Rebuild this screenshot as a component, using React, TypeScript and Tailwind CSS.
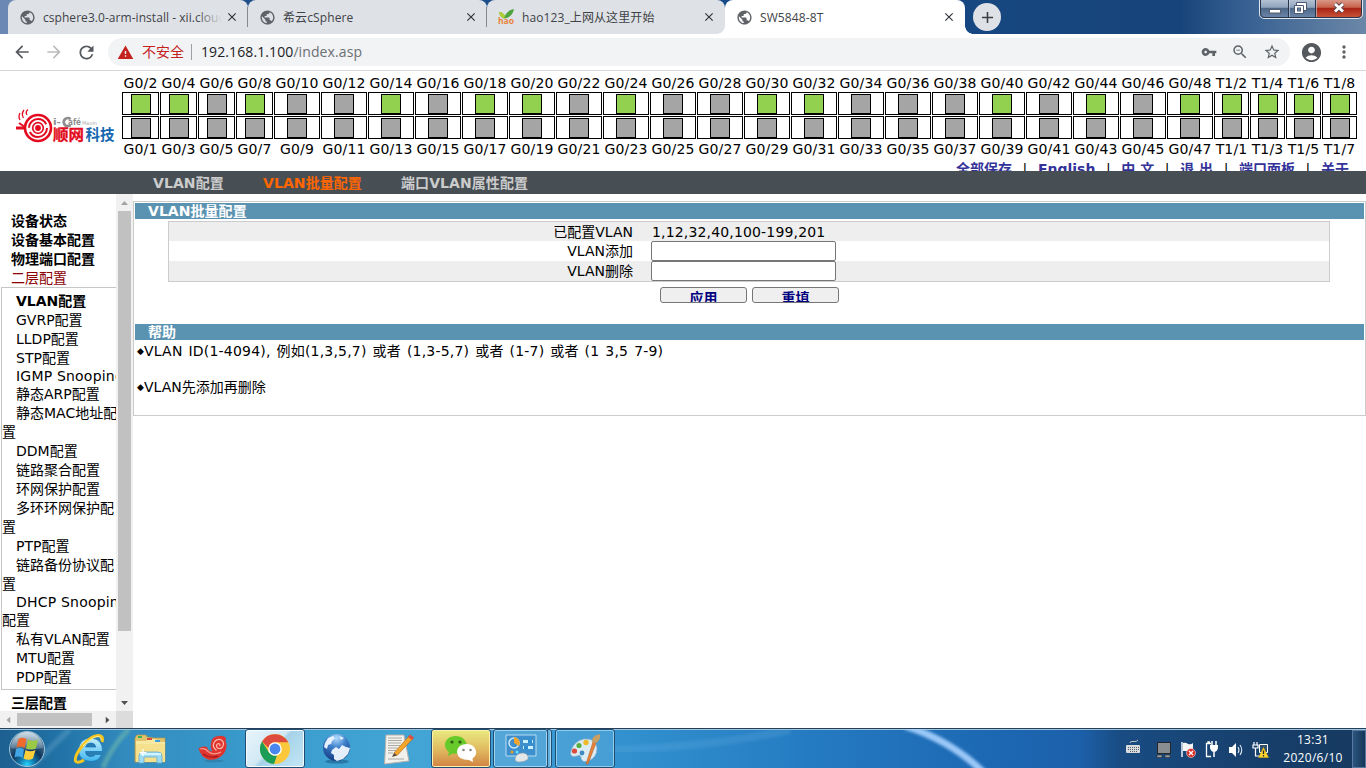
import type { ReactNode } from 'react';
import {
  MdArrowBack, MdArrowForward, MdRefresh, MdWarning, MdVpnKey, MdZoomOut,
  MdStarBorder, MdAccountCircle, MdMoreVert, MdPublic, MdClose, MdAdd,
} from 'react-icons/md';

const UI = "font-['Open_Sans','Noto_Sans_CJK_SC',sans-serif]";
const PAGE = "font-['DejaVu_Sans','Noto_Sans_CJK_SC',sans-serif]";

/* ---------- browser frame ---------- */

function HaoIcon() {
  return (
    <svg width="18" height="18" viewBox="0 0 18 18" className="-ml-px shrink-0 overflow-visible">
      <path d="M2 4 C5 4 7 6 8 8 C9 5 12 2 17 1 C16 6 13 10 7 10.500 C4 9.500 2.500 7 2 4Z" fill="#4fa33c" />
      <path d="M2 4 C5 4 7 6 8 8 L7 10.500 C4 9.500 2.500 7 2 4Z" fill="#b4d034" />
      <text x="1" y="15.500" fontSize="8.500" fontWeight="bold" fontFamily="Open Sans, sans-serif" fill="#e8813a" textLength="16" lengthAdjust="spacingAndGlyphs">hao</text>
    </svg>
  );
}

function Tab({ title, icon, active, separator, fade, width }: { title: string; icon?: ReactNode; active?: boolean; separator?: boolean; fade?: boolean; width: string }) {
  return (
    <div className={`relative flex h-[34px] items-center rounded-t-[8px] pl-[11px] pr-[9px] ${width} ${active ? 'bg-white' : 'bg-[#dee1e6]'}`}>
      {icon ?? <MdPublic className="size-[17px] shrink-0 text-[#5f6368]" />}
      <div className={`relative ml-[7px] mt-[2px] h-[22px] flex-1 overflow-hidden whitespace-nowrap text-[12px] leading-[21px] text-[#3f4347] ${fade ? 'tracking-[0.05px]' : 'tracking-[0.1px]'}`}>
        {title}
        {fade && <span className="absolute right-0 top-0 h-full w-[26px] bg-gradient-to-r from-transparent to-[#dee1e6]" />}
      </div>
      <MdClose className="ml-[3px] size-[14px] shrink-0 text-[#303438]" />
      {separator && <span className="absolute right-0 top-[7px] h-[20px] w-px bg-[#85898e]" />}
      {active && (
        <>
          <span className="absolute bottom-0 left-[-8px] size-[8px] bg-[radial-gradient(circle_at_0_0,transparent_7.500px,white_8px)]" />
          <span className="absolute bottom-0 right-[-8px] size-[8px] bg-[radial-gradient(circle_at_100%_0,transparent_7.500px,white_8px)]" />
        </>
      )}
    </div>
  );
}

function WindowButtons() {
  return (
    <svg width="106" height="20" viewBox="0 0 106 20">
      <defs>
        <linearGradient id="wb" x1="0" y1="0" x2="0" y2="1">
          <stop offset="0" stopColor="#b9c6d6" /><stop offset="0.45" stopColor="#8fa3bc" /><stop offset="0.5" stopColor="#4d6789" /><stop offset="1" stopColor="#6b86a8" />
        </linearGradient>
        <linearGradient id="wr" x1="0" y1="0" x2="0" y2="1">
          <stop offset="0" stopColor="#dba08f" /><stop offset="0.45" stopColor="#c8614b" /><stop offset="0.5" stopColor="#a92413" /><stop offset="1" stopColor="#c9543a" />
        </linearGradient>
      </defs>
      <path d="M1 -1H104V13Q104 17.500 99 17.500H6Q1 17.500 1 13Z" fill="url(#wb)" />
      <path d="M57 -1H104V13Q104 17.500 99 17.500H57Z" fill="url(#wr)" />
      <path d="M0.500 -1V14Q0.500 18.500 6 18.500H98Q103.500 18.500 103.500 14V-1" fill="none" stroke="#dfe6ee" />
      <path d="M1.500 -1V13Q1.500 17.500 6 17.500H98Q102.500 17.500 102.500 13V-1M29.500 0V17M56.500 0V17" fill="none" stroke="#26364c" />
      <path d="M30.500 0V17M57.500 0V17" stroke="#c9d3df" strokeOpacity="0.6" />
      <rect x="10.500" y="9.500" width="11" height="3.500" fill="#fff" stroke="#56606e" />
      <path d="M37.500 2.500H47.500V10.500H37.500Z" fill="#fff" stroke="#4a5a74" />
      <path d="M35.500 5.500H44.500V13.500H35.500Z" fill="#fff" stroke="#4a5a74" />
      <rect x="38.500" y="8" width="3" height="3" fill="#6f86a8" stroke="#4a5a74" />
      <path d="M76 4L84 11.500M84 4L76 11.500" stroke="#58434c" strokeWidth="4.600" />
      <path d="M76 4L84 11.500M84 4L76 11.500" stroke="#fff" strokeWidth="2.800" />
    </svg>
  );
}

function BrowserFrame() {
  return (
    <div className={`shrink-0 ${UI}`}>
      <div className="flex h-[34px] items-start bg-[linear-gradient(90deg,#6b88b4_0px,#6b88b4_10px,#205089_200px,#174b88_700px,#17447a_1180px,#355f91_1240px,#6b87a7_1366px)] pl-[8px]">
        <Tab title="csphere3.0-arm-install - xii.cloud" fade separator width="w-[240px]" />
        <Tab title="希云cSphere" separator width="w-[239px]" />
        <Tab title="hao123_上网从这里开始" icon={<HaoIcon />} width="w-[238px]" />
        <Tab title="SW5848-8T" active width="w-[240px]" />
        <div className="ml-[8px] mt-[3px] flex size-[28px] items-center justify-center rounded-full bg-[#dee1e6]">
          <MdAdd className="size-[19px] text-[#3c4043]" />
        </div>
        <div className="ml-auto mr-[1px]"><WindowButtons /></div>
      </div>
      <div className="flex h-[37px] items-center border-b border-[#d5d7da] bg-white">
        <MdArrowBack className="ml-[12px] size-[20px] text-[#55595d]" />
        <MdArrowForward className="ml-[12px] size-[20px] text-[#babcbe]" />
        <MdRefresh className="ml-[12px] size-[21px] text-[#55595d]" />
        <div className="ml-[11px] flex h-[28px] w-[1182px] items-center rounded-full bg-[#f1f3f4] pl-[9px] pr-[9px]">
          <MdWarning className="size-[17px] text-[#c5221f]" />
          <span className="ml-[8px] w-[42px] whitespace-nowrap text-[14px] leading-[20px] text-[#c5221f]">不安全</span>
          <span className="ml-[7px] h-[16px] w-px bg-[#9aa0a6]" />
          <span className="ml-[9px] whitespace-nowrap text-[14px] leading-[20px] tracking-[0.1px] text-[#202124]">192.168.1.100<span className="text-[#6b6f74]">/index.asp</span></span>
          <span className="flex-1" />
          <MdVpnKey className="size-[16px] text-[#5f6368]" />
          <MdZoomOut className="ml-[14px] size-[18px] text-[#5f6368]" />
          <MdStarBorder className="ml-[14px] size-[18px] text-[#5f6368]" />
        </div>
        <MdAccountCircle className="ml-[10px] size-[23px] text-[#55595d]" />
        <MdMoreVert className="ml-[11px] size-[20px] text-[#5f6368]" />
      </div>
    </div>
  );
}

/* ---------- switch panel ---------- */

function Logo() {
  return (
    <svg width="122" height="100" viewBox="0 71 122 100" className="shrink-0">
      <g fill="none" stroke="#e30b20">
        <circle cx="38" cy="128" r="13" strokeWidth="2.600" />
        <circle cx="38" cy="128" r="9" strokeWidth="2" strokeDasharray="24 4.300" />
        <circle cx="38" cy="128" r="5.300" strokeWidth="1.700" />
        <path d="M20 120Q18 117 20 113M23.500 118Q21 114 24 110M27 115Q25 112 28 109.500" strokeWidth="1.300" />
        <path d="M16 128H24" strokeWidth="3" />
        <path d="M19 123L25 127" strokeWidth="2" />
      </g>
      <circle cx="38" cy="128" r="2.900" fill="#e30b20" />
      <g fontFamily="DejaVu Sans, sans-serif" fontWeight="bold" fill="#8e8e8e">
        <text x="53" y="125" fontSize="9" textLength="8" lengthAdjust="spacingAndGlyphs">i-</text>
        <path d="M70.500 119.200A4 4 0 1 0 70.500 125" fill="none" stroke="#8e8e8e" strokeWidth="2.800" />
        <text x="68" y="124.500" fontSize="8" textLength="13" lengthAdjust="spacingAndGlyphs">afé</text>
        <text x="82" y="124.500" fontSize="5.500" fontWeight="normal" fill="#b0b0b0" textLength="15" lengthAdjust="spacingAndGlyphs">Mavin</text>
      </g>
      <g fontFamily="Noto Sans CJK SC, sans-serif" fontWeight="bold" fontSize="15">
        <text x="53" y="140" fill="#e30b20" stroke="#e30b20" strokeWidth="0.300" textLength="31" lengthAdjust="spacingAndGlyphs">顺网</text>
        <text x="85.500" y="140" fill="#1667b0" textLength="29" lengthAdjust="spacingAndGlyphs">科技</text>
      </g>
    </svg>
  );
}

const PORTS = [
  ...Array.from({ length: 24 }, (_, i) => ({ top: `G0/${2 * i + 2}`, bottom: `G0/${2 * i + 1}`, kind: i < 4 ? 'short' : 'long' })),
  ...Array.from({ length: 4 }, (_, i) => ({ top: `T1/${2 * i + 2}`, bottom: `T1/${2 * i + 1}`, kind: 'trunk' })),
];
const UP = new Set(['G0/2', 'G0/4', 'G0/8', 'G0/14', 'G0/18', 'G0/20', 'G0/24', 'G0/30', 'G0/32', 'G0/40', 'G0/44', 'G0/48', 'T1/2', 'T1/4', 'T1/6', 'T1/8']);
const PORT_SIZE: Record<string, string> = {
  short: 'w-[37px] pl-[8px]',
  long: 'w-[46px] pl-[12px]',
  trunk: 'w-[35px] pl-[7px]',
};

function PortCell({ name, kind }: { name: string; kind: string }) {
  return (
    <div className={`h-[23px] border border-black pt-px ${PORT_SIZE[kind]}`}>
      <div className={`size-[20px] border border-black ${UP.has(name) ? 'bg-[#92d050]' : 'bg-[#a5a5a5]'}`} />
    </div>
  );
}

function Header() {
  const sep = <span className="font-normal text-black">|</span>;
  return (
    <header className="flex h-[100px] shrink-0 overflow-hidden bg-white">
      <Logo />
      <div className="flex flex-col">
        <div className="flex gap-px pt-[4px] tracking-[0.15px]">
          {PORTS.map((p) => (
            <div key={p.top} className="flex flex-col items-center">
              <span className="flex h-[17px] w-0 justify-center whitespace-nowrap leading-[17px]">{p.top}</span>
              <PortCell name={p.top} kind={p.kind} />
              <div className="mt-px"><PortCell name={p.bottom} kind={p.kind} /></div>
              <span className="flex h-[20px] w-0 justify-center whitespace-nowrap leading-[20px]">{p.bottom}</span>
            </div>
          ))}
        </div>
        <div className="mt-[1px] flex w-[1227px] justify-between whitespace-nowrap pl-[834px] font-bold leading-[18px] text-[#333399]">
          <span>全部保存</span>{sep}<span>English</span>{sep}<span>中 文</span>{sep}<span>退 出</span>{sep}<span>端口面板</span>{sep}<span>关于</span>
        </div>
      </div>
    </header>
  );
}

const MENU = ['VLAN配置', 'GVRP配置', 'LLDP配置', 'STP配置', 'IGMP Snooping', '静态ARP配置', '静态MAC地址配', '/置', 'DDM配置', '链路聚合配置', '环网保护配置', '多环环网保护配', '/置', 'PTP配置', '链路备份协议配', '/置', 'DHCP Snooping', '/配置', '私有VLAN配置', 'MTU配置', 'PDP配置'];

function Arrow({ className }: { className: string }) {
  return <svg width="7" height="4" viewBox="0 0 7 4" className={className}><path d="M0 4L3.500 0L7 4Z" fill="currentColor" /></svg>;
}

function Sidebar() {
  return (
    <aside className="flex w-[133px] shrink-0 flex-col">
      <div className="flex h-[517px]">
        <div className="w-[116px] overflow-hidden whitespace-nowrap">
          <ul className="pl-[11px] pt-[18px] font-bold leading-[19px]">
            <li>设备状态</li>
            <li>设备基本配置</li>
            <li>物理端口配置</li>
            <li className="font-normal text-[#8b0000]">二层配置</li>
          </ul>
          <ul className="-mt-px ml-px h-[403px] border-y border-l border-[#c6c6c6] pt-[4px]">
            {MENU.map((m, i) => (
              <li key={i} className={`${m.includes('Snoop') ? 'h-[17px] leading-[17px] tracking-[0.2px]' : 'h-[19px] leading-[19px]'} ${m[0] === '/' ? 'pl-0' : 'pl-[14px]'} ${i === 0 ? 'font-bold' : ''}`}>{m.replace('/', '')}</li>
            ))}
          </ul>
          <p className="mt-[4px] pl-[11px] font-bold leading-[19px]">三层配置</p>
        </div>
        <div className="flex w-[17px] flex-col items-center bg-[#f1f1f1]">
          <div className="flex h-[17px] items-center"><Arrow className="text-[#a3a3a3]" /></div>
          <div className="h-[420px] w-[13px] bg-[#c1c1c1]" />
          <div className="mt-auto flex h-[17px] items-center"><Arrow className="rotate-180 text-[#505050]" /></div>
        </div>
      </div>
      <div className="flex h-[17px] items-center bg-[#f1f1f1]">
        <div className="flex w-[17px] justify-center"><Arrow className="-rotate-90 text-[#a3a3a3]" /></div>
        <div className="h-[13px] w-[75px] bg-[#c1c1c1]" />
        <div className="ml-auto flex w-[17px] justify-center"><Arrow className="rotate-90 text-[#505050]" /></div>
        <div className="size-[17px] bg-[#dcdcdc]" />
      </div>
    </aside>
  );
}

function Row({ label, children, shade, first }: { label: string; children: ReactNode; shade?: boolean; first?: boolean }) {
  return (
    <div className={`flex items-center ${first ? 'h-[19px] pt-[2px]' : 'h-[20px]'} ${shade ? 'bg-[#eeeeee]' : 'bg-white'}`}>
      <span className="w-[465px] pr-px text-right leading-[19px]">{label}</span>
      {children}
    </div>
  );
}

function Bar({ children }: { children: ReactNode }) {
  return <h2 className="h-[16px] bg-[#5a93b1] pl-[13px] font-bold leading-[16px] tracking-[0.05px] text-white">{children}</h2>;
}

function Main() {
  const field = 'ml-[17px] h-[20px] w-[185px] rounded-[2px] border border-[#767676] bg-white outline-none';
  const button = 'flex h-[16px] w-[87px] justify-center overflow-hidden rounded-[3px] border border-[#767676] bg-[#efefef] pt-[1px] font-bold leading-[19px] text-[#000080]';
  const dot = <span className="flex w-[7px] shrink-0 items-center justify-center text-[9px] leading-[18px]">◆</span>;
  return (
    <main className="flex-1 pt-[7px]">
      <section className="h-[215px] border border-[#cccccc] p-px">
        <Bar>VLAN批量配置</Bar>
        <div className="ml-[33px] mt-[2px] w-[1162px] border border-[#cccccc]">
          <Row label="已配置VLAN" shade first><span className="ml-[18px] tracking-[0.16px]">1,12,32,40,100-199,201</span></Row>
          <Row label="VLAN添加"><input className={field} /></Row>
          <Row label="VLAN删除" shade><input className={field} /></Row>
        </div>
        <div className="ml-[525px] mt-[5px] flex gap-[5px]">
          <button className={button}>应用</button>
          <button className={button}>重填</button>
        </div>
        <div className="mt-[21px]"><Bar>帮助</Bar></div>
        <p className="ml-[2px] mt-[2px] flex whitespace-nowrap leading-[18px]">{dot}<span className="tracking-[0.2px] [word-spacing:1.300px]">VLAN ID(1-4094), 例如(1,3,5,7) 或者 (1,3-5,7) 或者 (1-7) 或者 (1 3,5 7-9)</span></p>
        <p className="ml-[2px] mt-[18px] flex whitespace-nowrap leading-[18px]">{dot}VLAN先添加再删除</p>
      </section>
    </main>
  );
}

/* ---------- taskbar ---------- */

function StartOrb() {
  return (
    <svg width="38" height="38" viewBox="0 0 38 38">
      <defs>
        <radialGradient id="orb" cx="0.5" cy="0.95" r="0.9"><stop offset="0" stopColor="#24d3ff" /><stop offset="0.25" stopColor="#1277ab" /><stop offset="0.5" stopColor="#10375c" /><stop offset="1" stopColor="#5d8aa8" /></radialGradient>
        <linearGradient id="shine" x1="0" y1="0" x2="0" y2="1"><stop offset="0" stopColor="#fff" stopOpacity="0.7" /><stop offset="1" stopColor="#fff" stopOpacity="0.15" /></linearGradient>
      </defs>
      <circle cx="19" cy="19" r="17.500" fill="url(#orb)" stroke="#a4c5d8" />
      <path d="M3 18A16 16 0 0 1 35 18Q19 22 3 18Z" fill="url(#shine)" />
      <path d="M10.500 9Q14 6.500 18.500 9L16.500 18Q12 15.500 8.500 17.500Z" fill="#f06a2b" />
      <path d="M20 9.500Q25 12 30 9.500L28 18.500Q23 20.500 18 18.500Z" fill="#9bc845" />
      <path d="M8 19Q12 17 16 19.500L14.500 28Q10 25.500 6.500 27.500Z" fill="#41a5e6" />
      <path d="M17.500 20Q22 22.500 27.500 20L25 28.500Q20.500 31 15.500 28.500Z" fill="#ffcf3b" />
    </svg>
  );
}

function IE() {
  return (
    <svg width="32" height="32" viewBox="0 0 32 32">
      <defs><linearGradient id="ie" x1="0" y1="0" x2="0" y2="1"><stop offset="0" stopColor="#c6f2ff" /><stop offset="1" stopColor="#3db4ee" /></linearGradient></defs>
      <path d="M29.500 18.500H12.500Q13 23.500 18 23.500Q21 23.500 22.500 21.500H28.500Q26 28.500 18 28.500Q5.500 28 5.500 17Q6 5.500 18 5Q30 6 29.500 18.500ZM12.600 14H22.800Q22 10 18 10Q13.500 10 12.600 14Z" fill="url(#ie)" stroke="#1b77b8" strokeWidth="0.800" />
      <path d="M29 9Q31 2.500 25 2.500Q18 3 10 12Q1 23 2.500 28Q4.500 31 11 27" fill="none" stroke="#f6c51f" strokeWidth="3" />
      <path d="M28 7Q28 3 24 3.500Q17 5 10 13" fill="none" stroke="#ffef9a" strokeWidth="1" />
    </svg>
  );
}

function Folder() {
  return (
    <svg width="32" height="30" viewBox="0 0 32 30">
      <path d="M1 4L3 1H12L13 3L20 4H31V28H1Z" fill="#e0c36a" stroke="#b89a48" strokeWidth="0.700" />
      <path d="M2 7H12L14 5H22L23 8H31V28H2Z" fill="#f8e9a2" />
      <path d="M2 10H31V28H2Z" fill="#f5e08d" />
      <path d="M4 2H8V4H4Z" fill="#3ab05a" /><path d="M13 4H18V6H13Z" fill="#d84a3a" /><path d="M21 6H26V8H21Z" fill="#3f9ee0" />
      <path d="M5 29V22Q5 18 9 18H24Q28 18 28 22V29H23V23H10V29Z" fill="#9ddcf3" stroke="#62acd0" strokeWidth="0.800" />
      <path d="M6 20H27" stroke="#e9fbff" strokeWidth="1.500" /><path d="M9 15V22M5.500 18.500H12.500" stroke="#fff" strokeWidth="1.200" />
    </svg>
  );
}

function Snail() {
  return (
    <svg width="30" height="28" viewBox="0 0 30 28">
      <ellipse cx="16" cy="26" rx="10" ry="1.500" fill="#2a6f98" opacity="0.5" />
      <path d="M13 8Q14 1 21 1Q25 0 28 3Q27 5 28.500 9Q29 16 24 20.500Q18 26 10 24.500Q3 22 0.500 13.500Q5 10.500 9 12Q10 16 14 16.500Q12 12 13 8Z" fill="#e0352f" />
      <path d="M18.500 15.500Q14 12 16 7.500Q19 3 23.500 5Q27 8 24.500 12Q22 15 19 12.500Q17.500 9.500 20.500 8.500Q23 9 21.500 11" fill="none" stroke="#ffb9aa" strokeWidth="1.200" />
      <path d="M2 14Q7 12.500 10 16.500Q16 21 23 17" fill="none" stroke="#f79a8c" strokeWidth="1.300" />
      <path d="M5 19Q12 24 20 21" fill="none" stroke="#a8191c" strokeWidth="1.400" />
    </svg>
  );
}

function Chrome() {
  return (
    <svg width="30" height="30" viewBox="0 0 30 30">
      <circle cx="15" cy="15" r="15" fill="#fbc83c" />
      <path d="M2 7.500A15 15 0 0 1 28.200 8.200H15Q10 8.500 8.500 14Z" fill="#de4b3f" />
      <path d="M2 7.500L9 18.500Q12 22 17 21.600L14 30A15 15 0 0 1 2 7.500Z" fill="#1b9c57" />
      <circle cx="15" cy="15" r="6.800" fill="#fff" /><circle cx="15" cy="15" r="5.400" fill="#4a86ef" />
    </svg>
  );
}

function Globe() {
  return (
    <svg width="30" height="31" viewBox="0 0 30 31">
      <defs><radialGradient id="gl" cx="0.5" cy="0.15" r="0.9"><stop offset="0" stopColor="#b3dcff" /><stop offset="0.4" stopColor="#3d7fca" /><stop offset="1" stopColor="#12357d" /></radialGradient></defs>
      <ellipse cx="15" cy="28.500" rx="12" ry="2" fill="#12517c" opacity="0.5" />
      <circle cx="14.500" cy="14.500" r="13.500" fill="url(#gl)" />
      <path d="M3 10L6 5L11 3L13 5L10 8L9 11L6 12L5 16L2 14ZM10 17L14 14L17 16L20 12L24 14L28 15L26 21L21 26L15 28L12 26L12 22L9 20ZM17 3L22 5L19 7Z" fill="#eef7ff" opacity="0.95" />
    </svg>
  );
}

function Notepad() {
  return (
    <svg width="32" height="32" viewBox="0 0 32 32">
      <path d="M4 2H22L27 28L2.500 31Z" fill="#f3f1ec" stroke="#b3b0aa" />
      <path d="M6 5H20M6 7.500H20M6 10H19M6 12.500H18M6 15H16M6 17.500H14M6 20H11M6 26H22" stroke="#aaa9a7" />
      <path d="M12 20L27 3L30.500 6L15 22.500Z" fill="#f3a62b" stroke="#b36e18" strokeWidth="0.700" />
      <path d="M26 4L28 1.500L32 4.500L30 7Z" fill="#d94f43" /><path d="M12 20L15 22.500L10 24Z" fill="#5b4636" />
    </svg>
  );
}

function WeChat() {
  return (
    <svg width="34" height="28" viewBox="0 0 34 28">
      <path d="M12 1C5 1 1 5 1 10Q1 14 5 17L4 21L9 18.500Q18 20 21 15Q24 11 22 7Q19 1 12 1Z" fill="#67c92a" />
      <path d="M23 9C16 9 13 13 13 17.500Q14 25 25 25L29 27L28.500 23.500Q33 20 32 16Q30 9 23 9Z" fill="#fff" />
      <circle cx="8" cy="7" r="1.600" fill="#2b5d16" /><circle cx="16" cy="7" r="1.600" fill="#2b5d16" />
      <circle cx="19.500" cy="15" r="1.300" fill="#8a8a8a" /><circle cx="26.500" cy="15" r="1.300" fill="#8a8a8a" />
    </svg>
  );
}

function Control() {
  return (
    <svg width="32" height="30" viewBox="0 0 32 30">
      <path d="M1 1H31V22H1Z" fill="#3d8fce" stroke="#b8def2" />
      <circle cx="9" cy="9" r="5" fill="none" stroke="#cdeaf7" strokeWidth="1.500" /><path d="M9 9V3A6 6 0 0 1 14 12Z" fill="#f2a52c" />
      <path d="M18 6H28V9H18ZM18 12H28V15H18Z" fill="#c8f2ff" /><path d="M23 6H27V9H23ZM19 12H23V15H19Z" fill="#298cd5" />
      <circle cx="7" cy="18" r="1.500" fill="#ef9b26" /><circle cx="12" cy="18" r="1.500" fill="#65e0ff" />
      <path d="M10 25Q11 19 18 19Q24 20 23 25Q20 28 14 28Q10 28 10 25Z" fill="#e4e7e8" stroke="#96a1a8" strokeWidth="0.600" />
    </svg>
  );
}

function Paint() {
  return (
    <svg width="34" height="32" viewBox="0 0 34 32">
      <path d="M3 18Q6 8 16 6Q28 5 29 15Q29 25 20 28Q14 30 13 25Q13 21 9 23Q1 25 3 18Z" fill="#dcecf5" stroke="#8db3c9" strokeWidth="0.800" />
      <circle cx="6.500" cy="18" r="2.600" fill="#dc4a3b" /><circle cx="11" cy="12.500" r="2.600" fill="#58ad42" /><circle cx="18" cy="9.500" r="2.700" fill="#edb92a" /><circle cx="14" cy="20" r="2.400" fill="#428bc2" />
      <path d="M18 31L25 9L28 10L20 31Z" fill="#e8853b" stroke="#b65d24" strokeWidth="0.600" />
      <path d="M24 9Q23 3 32 1Q33 7 28 10Z" fill="#c99f64" />
    </svg>
  );
}

function TrayIcons() {
  return (
    <svg width="146" height="20" viewBox="1125 738 146 20">
      <path d="M1130 742Q1130 740 1133 740.500Q1137 741 1138 739" fill="none" stroke="#bfc4c9" />
      <rect x="1126" y="744" width="14" height="8" rx="1" fill="#d8dbdd" />
      <path d="M1128 746.500H1139M1128 748.500H1139M1130 750.500H1137" stroke="#5a6069" strokeDasharray="1 1" />
      <rect x="1157.500" y="741.500" width="13" height="11" fill="#8b8e91" stroke="#24282c" />
      <path d="M1157 754H1162V756.500H1157ZM1165 754H1170V756.500H1165Z" fill="#9a9da0" stroke="#222" strokeWidth="0.500" />
      <path d="M1182 741V756" stroke="#fff" strokeWidth="1.400" /><path d="M1183 742Q1186 741 1188 743Q1191 744 1193 742V751Q1189 752 1187 750H1183Z" fill="#f6f6f6" />
      <circle cx="1191" cy="752" r="4.500" fill="#dc2d27" stroke="#fff" strokeWidth="0.500" /><path d="M1189 750L1193 754M1193 750L1189 754" stroke="#fff" strokeWidth="1.400" />
      <path d="M1211 755.500H1206.500V742.500H1211M1208 742V741H1210" fill="none" stroke="#fff" strokeWidth="1.300" />
      <path d="M1212 744V740M1216 744V740M1214 751V756" stroke="#fff" strokeWidth="1.500" /><path d="M1210 744H1218V747Q1217 751 1214 751Q1211 751 1210 747Z" fill="#fff" />
      <path d="M1229 746H1232L1236 742V756L1232 752H1229Z" fill="#fff" /><path d="M1238 746Q1240 749 1238 752M1240 744Q1243.500 749 1240 754" fill="none" stroke="#dfe8f0" strokeWidth="1.100" />
      <path d="M1254 741V744M1257 741V744M1253 744H1258V747H1253ZM1255.500 747V755H1259" fill="none" stroke="#fff" strokeWidth="1.200" /><path d="M1259.500 743.500H1267.500V751.500H1259.500Z" fill="#31506d" stroke="#fff" />
      <path d="M1263.500 746.500L1268.500 756.500H1258.500Z" fill="#ffd632" stroke="#d8a800" strokeWidth="0.500" /><path d="M1263.500 749.500V753M1263.500 754V755.500" stroke="#222" strokeWidth="1.300" />
    </svg>
  );
}

function Taskbar() {
  const slot = 'flex h-[39px] items-center justify-center';
  const frame = 'rounded-[3px] border border-[#214d72]';
  return (
    <footer className={`relative flex h-[40px] shrink-0 items-center border-t border-[#26405a] bg-[linear-gradient(90deg,#1d5f90_0px,#2173a7_60px,#338cbf_130px,#3a9bcd_260px,#43a4d6_420px,#318fce_640px,#257cc2_800px,#1d69b4_980px,#1c60aa_1080px,#194c83_1120px,#173f6b_1260px,#16395f_1366px)] shadow-[inset_0_1px_0_#9fc5df] ${UI}`}>
      <svg width="1366" height="39" viewBox="0 0 1366 39" className="absolute left-0 top-0">
        <defs><filter id="soft"><feGaussianBlur stdDeviation="1.800" /></filter></defs>
        <path d="M905 -3Q952 12 984 44" stroke="#a8d2ff" strokeWidth="7" fill="none" filter="url(#soft)" opacity="0.9" />
        <path d="M103 39Q111 18 129 0" stroke="#8ed2a6" strokeWidth="5" fill="none" filter="url(#soft)" opacity="0.4" />
        <path d="M30 39L70 0" stroke="#a6d2ea" strokeWidth="6" fill="none" filter="url(#soft)" opacity="0.2" />
        <path d="M610 21Q710 18 790 1" stroke="#73b7e3" strokeWidth="8" fill="none" filter="url(#soft)" opacity="0.2" />
      </svg>
      <div className={`${slot} relative w-[54px]`}><StartOrb /></div>
      <div className={`${slot} relative ml-[4px] w-[61px]`}><IE /></div>
      <div className={`${slot} relative w-[62px]`}><Folder /></div>
      <div className={`${slot} relative w-[63px]`}><Snail /></div>
      <div className={`${slot} ${frame} relative ml-px w-[60px] bg-[linear-gradient(135deg,#e9f5fb_0%,#d1e9f5_45%,#a6d2e9_50%,#c4e7f5_100%)] pr-px shadow-[inset_0_0_0_1px_#f3fbff]`}><Chrome /></div>
      <div className={`${slot} relative ml-px w-[61px]`}><Globe /></div>
      <div className={`${slot} relative w-[62px] pr-px`}><Notepad /></div>
      <div className={`${slot} ${frame} relative ml-[2px] w-[60px] bg-[linear-gradient(180deg,#e9eb80_0%,#e1bd62_50%,#d28242_100%)] shadow-[inset_0_0_0_1px_#fff0ae]`}><WeChat /></div>
      <div className="relative ml-[2px] flex">
        <div className={`${slot} ${frame} w-[55px] bg-[#5cabd9]/70 shadow-[inset_0_0_0_1px_#9fd5ef]`}><Control /></div>
        <div className="-ml-px h-[39px] w-[5px] rounded-r-[3px] border border-[#214d72] bg-[#65afdc] shadow-[inset_-1px_0_0_#a8d8ef]" />
      </div>
      <div className={`${slot} ${frame} relative ml-[3px] w-[60px] bg-[#55a6d8]/60 shadow-[inset_0_0_0_1px_#8ccdec]`}><Paint /></div>
      <div className="relative ml-auto flex h-[39px] items-center">
        <TrayIcons />
        <div className="ml-[3px] w-[78px] whitespace-nowrap text-center text-[12px] leading-[18px] tracking-[0.3px] text-white"><div>13:31</div><div>2020/6/10</div></div>
        <div className="h-[38px] w-[14px] border border-[#5779a0] bg-[linear-gradient(90deg,#2b5680,#173657)]" />
      </div>
    </footer>
  );
}

export default function App() {
  return (
    <div className="flex h-[768px] w-[1366px] flex-col overflow-hidden bg-white">
      <BrowserFrame />
      <div className={`flex h-[657px] flex-col text-[14px] text-black ${PAGE}`}>
        <Header />
        <nav className="flex h-[23px] shrink-0 items-center whitespace-nowrap bg-[#474e54] pl-[153px] font-bold leading-[23px] tracking-[0.08px] text-[#cccccc]">
          <span className="w-[110px] pt-[2px]">VLAN配置</span>
          <span className="w-[138px] pt-[2px] text-[#ff6600]">VLAN批量配置</span>
          <span className="pt-[2px]">端口VLAN属性配置</span>
        </nav>
        <div className="flex h-[534px]">
          <Sidebar />
          <Main />
        </div>
      </div>
      <Taskbar />
    </div>
  );
}
